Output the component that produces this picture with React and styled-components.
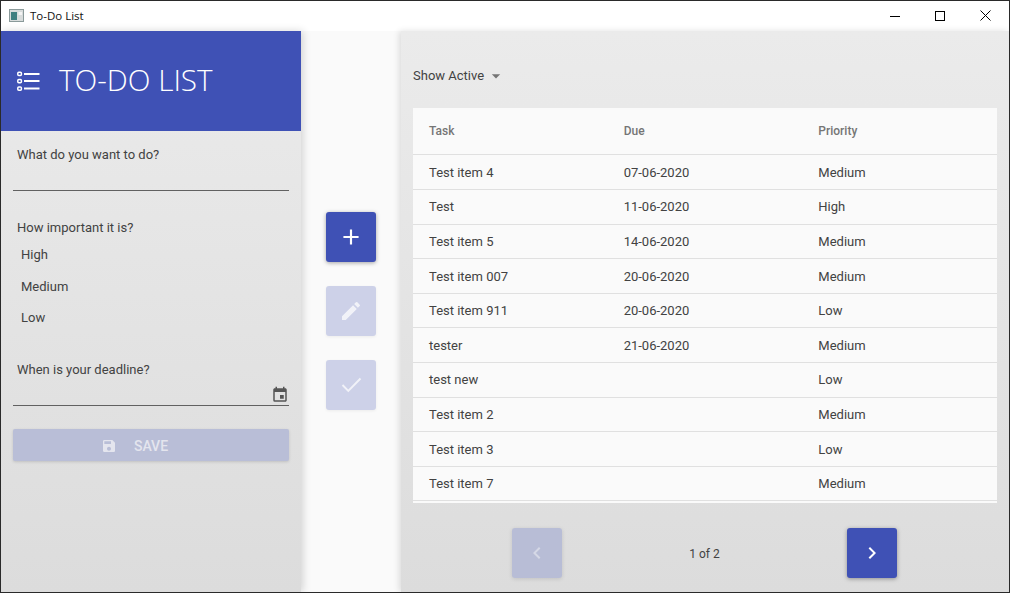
import styled, { createGlobalStyle } from 'styled-components';
import { MdAdd, MdEdit, MdSave, MdEvent, MdChevronLeft, MdChevronRight, MdArrowDropDown } from 'react-icons/md';

const tasks = [
    ['Test item 4', '07-06-2020', 'Medium'],
    ['Test', '11-06-2020', 'High'],
    ['Test item 5', '14-06-2020', 'Medium'],
    ['Test item 007', '20-06-2020', 'Medium'],
    ['Test item 911', '20-06-2020', 'Low'],
    ['tester', '21-06-2020', 'Medium'],
    ['test new', '', 'Low'],
    ['Test item 2', '', 'Medium'],
    ['Test item 3', '', 'Low'],
    ['Test item 7', '', 'Medium'],
];

const AppIcon = () => (
    <svg width="15" height="13" viewBox="0 0 15 13">
        <rect x="0.5" y="0.5" width="14" height="12" fill="#d8dcdc" stroke="#8a9a9a" />
        <rect x="2" y="3" width="6" height="8" fill="#3f7f80" />
        <rect x="9.5" y="3" width="3.5" height="3" fill="#f4f4f4" />
    </svg>
);

const ListIcon = () => (
    <svg width="23" height="20" viewBox="0 0 23 20" fill="none" stroke="#fff">
        <rect x="0.8" y="1.3" width="3.6" height="3.2" rx="1" strokeWidth="1.5" />
        <rect x="0.8" y="8.5" width="3.6" height="3.2" rx="1" strokeWidth="1.5" />
        <rect x="0.8" y="16" width="3.6" height="3.2" rx="1" strokeWidth="1.5" />
        <path d="M7 2.9H22.5M7 10.1H22.5M7 17.6H22.5" strokeWidth="2" />
    </svg>
);

const ThinCheck = () => (
    <svg width="24" height="24" viewBox="0 0 24 24" fill="none" stroke="currentColor" strokeWidth="1.9">
        <path d="M3.5 12L9.3 18L21.5 5.5" />
    </svg>
);

const App = () => {
    return (<>
        <GlobalStyle />
        <Window>
            <TitleBar>
                <TitleText><AppIcon />To-Do List</TitleText>
                <WindowControls>
                    <WindowButton>
                        <svg width="10" height="10" viewBox="0 0 10 10"><path d="M0 5.5H10" stroke="#000" /></svg>
                    </WindowButton>
                    <WindowButton>
                        <svg width="10" height="10" viewBox="0 0 10 10"><rect x="0.5" y="0.5" width="9" height="9" fill="none" stroke="#000" /></svg>
                    </WindowButton>
                    <WindowButton>
                        <svg width="11" height="11" viewBox="0 0 11 11"><path d="M0.5 0.5L10.5 10.5M10.5 0.5L0.5 10.5" stroke="#000" /></svg>
                    </WindowButton>
                </WindowControls>
            </TitleBar>
            <Main>
                <Sidebar>
                    <Banner>
                        <ListIcon />
                        <BannerTitle>TO-DO LIST</BannerTitle>
                    </Banner>
                    <Form>
                        <Label>What do you want to do?</Label>
                        <TextField />
                        <Label $top={29}>How important it is?</Label>
                        <Choices>
                            <Choice>High</Choice>
                            <Choice>Medium</Choice>
                            <Choice>Low</Choice>
                        </Choices>
                        <Label $top={36}>When is your deadline?</Label>
                        <DateField><MdEvent size={18} /></DateField>
                        <SaveButton><MdSave size={16} />SAVE</SaveButton>
                    </Form>
                </Sidebar>
                <Actions>
                    <ActionButton><MdAdd size={26} /></ActionButton>
                    <ActionButton $disabled><MdEdit size={24} /></ActionButton>
                    <ActionButton $disabled><ThinCheck /></ActionButton>
                </Actions>
                <Content>
                    <Filter>Show Active<MdArrowDropDown size={20} /></Filter>
                    <TableCard>
                        <HeadRow>
                            <span>Task</span>
                            <span>Due</span>
                            <span>Priority</span>
                        </HeadRow>
                        {tasks.map((task, i) =>
                            <Row key={i}>
                                <span>{task[0]}</span>
                                <span>{task[1]}</span>
                                <span>{task[2]}</span>
                            </Row>
                        )}
                    </TableCard>
                    <Pager>
                        <PageButton $disabled><MdChevronLeft size={24} /></PageButton>
                        <PageInfo>1 of 2</PageInfo>
                        <PageButton><MdChevronRight size={24} /></PageButton>
                    </Pager>
                </Content>
            </Main>
        </Window>
    </>);
};

const GlobalStyle = createGlobalStyle`
    html, body {
        margin: 0;
        padding: 0;
        background: #fff;
    }

    * {
        box-sizing: border-box;
    }
`;

const Window = styled.div`
    width: 1010px;
    height: 593px;
    display: flex;
    flex-direction: column;
    overflow: hidden;
    border: 1px solid #2a2a2a;
    font-family: Roboto, "Liberation Sans", sans-serif;
    font-size: 13px;
    color: #424242;
`;

const TitleBar = styled.div`
    height: 30px;
    flex: none;
    display: flex;
    justify-content: space-between;
    padding-bottom: 1px;
    background: #fff;
`;

const TitleText = styled.div`
    display: flex;
    align-items: center;
    gap: 6px;
    padding-left: 8px;
    font-family: "Open Sans", "Liberation Sans", sans-serif;
    font-size: 11.5px;
    color: #111;
`;

const WindowControls = styled.div`
    display: flex;
    padding-right: 1px;
`;

const WindowButton = styled.div`
    width: 45px;
    display: flex;
    align-items: center;
    justify-content: center;
    padding-right: 1px;
`;

const Main = styled.div`
    flex: 1;
    min-height: 0;
    display: flex;
    background: #fafafa;
`;

const Sidebar = styled.div`
    width: 300px;
    flex: none;
    position: relative;
    z-index: 1;
    background: linear-gradient(#ebebeb, #dcdcdc);
    box-shadow: 2px 0 8px rgba(0, 0, 0, 0.16);
`;

const Banner = styled.div`
    height: 100px;
    display: flex;
    align-items: center;
    gap: 19px;
    padding-left: 16px;
    background: #3f51b5;
    color: #fff;
`;

const BannerTitle = styled.h1`
    margin: 0 0 3px;
    font-family: "Open Sans", "Liberation Sans", sans-serif;
    font-size: 29.7px;
    font-weight: 300;
    line-height: 36px;
`;

const Form = styled.div`
    display: flex;
    flex-direction: column;
    padding: 16px 12px 0;
`;

const Label = styled.div`
    margin-top: ${props => props.$top || 0}px;
    padding-left: 4px;
    line-height: 16px;
`;

const TextField = styled.div`
    height: 28px;
    border-bottom: 1px solid #616161;
`;

const Choices = styled.div`
    display: flex;
    flex-direction: column;
    gap: 15.5px;
    margin-top: 11px;
    padding-left: 8px;
`;

const Choice = styled.div`
    line-height: 16px;
`;

const DateField = styled.div`
    height: 28px;
    display: flex;
    align-items: flex-end;
    justify-content: flex-end;
    padding-bottom: 1px;
    border-bottom: 1px solid #616161;
    color: #555;
`;

const SaveButton = styled.div`
    height: 32px;
    margin-top: 23px;
    display: flex;
    align-items: center;
    justify-content: center;
    gap: 17px;
    padding: 2px 33px 0 0;
    border-radius: 2px;
    background: #b9bed7;
    box-shadow: 0 1px 3px rgba(0, 0, 0, 0.14);
    color: #e4e5ee;
    font-size: 14px;
    font-weight: 500;
`;

const Actions = styled.div`
    width: 100px;
    flex: none;
    display: flex;
    flex-direction: column;
    align-items: center;
    justify-content: center;
    gap: 24px;
    padding-bottom: 2px;
`;

const ActionButton = styled.div`
    width: 50px;
    height: 50px;
    display: flex;
    align-items: center;
    justify-content: center;
    border-radius: 3px;
    background: ${props => props.$disabled ? '#cdd1e8' : '#3f51b5'};
    box-shadow: ${props => props.$disabled ? '0 1px 3px rgba(0, 0, 0, 0.06)' : '0 1px 4px rgba(0, 0, 0, 0.35)'};
    color: ${props => props.$disabled ? '#f1f2f8' : '#fff'};
`;

const Content = styled.div`
    flex: 1;
    min-width: 0;
    position: relative;
    display: flex;
    flex-direction: column;
    padding: 0 12px;
    background: linear-gradient(#ebebeb, #dcdcdc);
    box-shadow: -2px 0 6px rgba(0, 0, 0, 0.12);
`;

const Filter = styled.div`
    height: 77px;
    flex: none;
    display: flex;
    align-items: center;
    gap: 2px;
    padding-top: 12px;
    svg {
        color: #757575;
    }
`;

const TableCard = styled.div`
    height: 395px;
    flex: none;
    overflow: hidden;
    background: #fafafa;
`;

const Row = styled.div`
    height: 34.6px;
    display: grid;
    grid-template-columns: repeat(3, 1fr);
    align-items: center;
    border-bottom: 1px solid #e0e0e0;
    span {
        padding-left: 16px;
    }
`;

const HeadRow = styled(Row)`
    height: 47px;
    margin-bottom: 0.5px;
    font-size: 12px;
    font-weight: 500;
    color: #757575;
`;

const Pager = styled.div`
    flex: 1;
    display: flex;
    align-items: center;
    justify-content: space-between;
    padding: 10px 100px 0 99px;
`;

const PageButton = styled(ActionButton)`
    background: ${props => props.$disabled ? '#b8bdd6' : '#3f51b5'};
    color: ${props => props.$disabled ? '#d5d8e6' : '#fff'};
    box-shadow: 0 1px 4px rgba(0, 0, 0, ${props => props.$disabled ? 0.12 : 0.35});
`;

const PageInfo = styled.div`
    padding-top: 2px;
    font-size: 12px;
`;

export default App
